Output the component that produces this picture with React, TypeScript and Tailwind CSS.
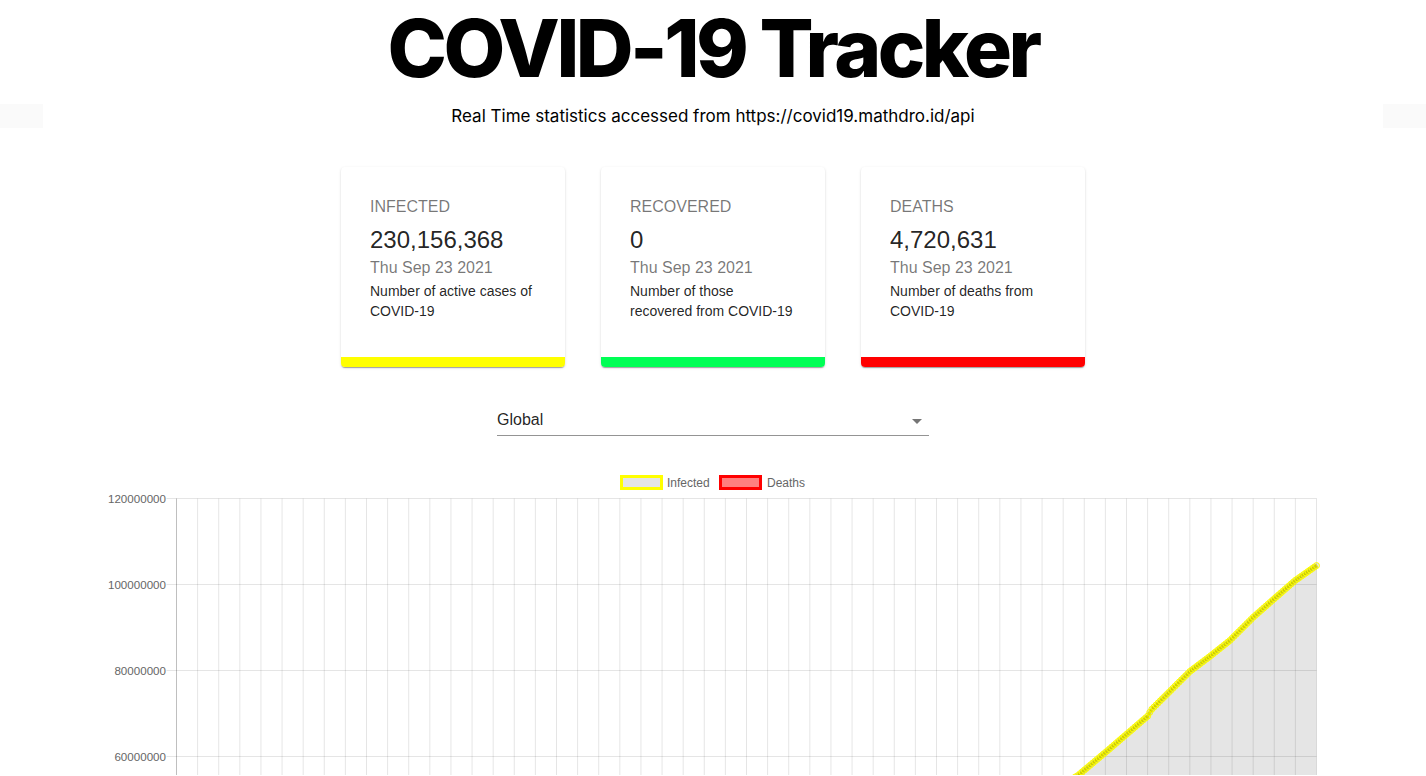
import React from "react";

const cards = [
  { label: "INFECTED", value: "230,156,368", text: "Number of active cases of COVID-19", bar: "bg-[#ffff00]" },
  { label: "RECOVERED", value: "0", text: "Number of those recovered from COVID-19", bar: "bg-[#00ff55]" },
  { label: "DEATHS", value: "4,720,631", text: "Number of deaths from COVID-19", bar: "bg-[#ff0000]" },
];

// chart geometry, in page pixels
const LEFT = 176.5;
const RIGHT = 1316.5;
const TOP = 499.5;
const ROW = 86;
const BASE = TOP + ROW * 6;
const COLS = 54;
const N = 541;
const VIEW_BOTTOM = 776;

// infected totals (millions) against x position, read off the reference
const knots: [number, number][] = [
  [176.5, 0], [300, 0.4], [400, 1.6], [500, 5], [600, 11], [700, 18], [800, 26],
  [900, 35], [1000, 45], [1078, 55.6], [1106.7, 61.2], [1147.7, 69.4], [1151, 70.8],
  [1190, 79.8], [1210, 83.3], [1230, 87], [1253.3, 92.4], [1273.3, 96.5], [1295, 100.9], [1316.5, 104.4],
];

const interp = (x: number) => {
  for (let i = 1; i < knots.length; i++) {
    const [x1, v1] = knots[i];
    const [x0, v0] = knots[i - 1];
    if (x <= x1) return v0 + ((x - x0) / (x1 - x0)) * (v1 - v0);
  }
  return knots[knots.length - 1][1];
};

const toY = (v: number) => BASE - v * (ROW / 20);

const xs = Array.from({ length: N }, (_, i) => LEFT + (i * (RIGHT - LEFT)) / (N - 1));
const infected = xs.map((x) => [x, toY(interp(x))] as const);

const linePath = (pts: readonly (readonly [number, number])[]) =>
  pts.map(([x, y], i) => `${i ? "L" : "M"}${x.toFixed(1)} ${y.toFixed(1)}`).join(" ");
const areaPath = (pts: readonly (readonly [number, number])[]) =>
  `${linePath(pts)} L${RIGHT} ${BASE} L${LEFT} ${BASE} Z`;

// only the rows that fall inside the window
const yLabels = ["120000000", "100000000", "80000000", "60000000"];

function Chart() {
  return (
    <svg
      width={1426}
      height={VIEW_BOTTOM - 465}
      viewBox={`0 465 1426 ${VIEW_BOTTOM - 465}`}
      className="block"
      style={{ fontFamily: "'Liberation Sans', Arial, sans-serif" }}
    >
      {/* legend */}
      <rect x={621.5} y={477.5} width={40} height={12} fill="rgba(0,0,0,0.1)" stroke="#ffff00" strokeWidth={3} />
      <text x={667} y={487.5} fontSize={12} fill="#666">Infected</text>
      <rect x={720.5} y={477.5} width={40} height={12} fill="rgba(255,0,0,0.5)" stroke="#ff0000" strokeWidth={3} />
      <text x={767} y={487.5} fontSize={12} fill="#666">Deaths</text>

      {/* grid */}
      {Array.from({ length: COLS + 1 }, (_, i) => {
        const x = LEFT + (i * (RIGHT - LEFT)) / COLS;
        return (
          <line key={"v" + i} x1={x} x2={x} y1={TOP} y2={BASE + 10} stroke={i === 0 ? "rgba(0,0,0,0.25)" : "rgba(0,0,0,0.1)"} strokeWidth={1} />
        );
      })}
      {yLabels.map((l, i) => {
        const y = TOP + i * ROW;
        return (
          <g key={l}>
            <line x1={LEFT - 10} x2={RIGHT} y1={y} y2={y} stroke="rgba(0,0,0,0.1)" strokeWidth={1} />
            <text x={166} y={y + 4} fontSize={11.6} fill="#666" textAnchor="end">{l}</text>
          </g>
        );
      })}

      {/* infected */}
      <path d={areaPath(infected)} fill="rgba(0,0,0,0.1)" />
      <path d={linePath(infected)} fill="none" stroke="#ffff00" strokeWidth={3} />
      {infected
        .filter(([, y]) => y < VIEW_BOTTOM + 4)
        .map(([x, y], i) => (
          <circle key={"i" + i} cx={x} cy={y} r={3} fill="rgba(0,0,0,0.1)" stroke="#ffff00" strokeWidth={1} />
        ))}
    </svg>
  );
}

export default function App() {
  return (
    <div className="h-[776px] overflow-hidden bg-white font-['Liberation_Sans',Arial,sans-serif] text-[rgba(0,0,0,0.87)]">
      <h1 className="pt-[8px] text-center font-['Inter',sans-serif] text-[80px] font-extrabold leading-none tracking-[-3.5px] text-black">
        COVID-19 Tracker
      </h1>

      <div className="mt-[16px] flex h-[24px] items-center justify-between">
        <div className="h-[24px] w-[43px] bg-[#fafafa]" />
        <p className="font-['Inter',sans-serif] text-[17px] leading-[24px] text-black">
          Real Time statistics accessed from https://covid19.mathdro.id/api
        </p>
        <div className="h-[24px] w-[43px] bg-[#fafafa]" />
      </div>

      <div className="mt-[39px] flex justify-center gap-[36px]">
        {cards.map((c) => (
          <div
            key={c.label}
            className="flex h-[200px] w-[224px] flex-col overflow-hidden rounded-[4px] bg-white shadow-[0px_2px_1px_-1px_rgba(0,0,0,0.2),0px_1px_1px_0px_rgba(0,0,0,0.14),0px_1px_3px_0px_rgba(0,0,0,0.12)]"
          >
            <div className="flex-1 pl-[29px] pr-[27px] pt-[28px]">
              <div className="text-[16px] leading-[24px] text-[rgba(0,0,0,0.54)]">{c.label}</div>
              <div className="mt-[5px] text-[24px] leading-[32px]">{c.value}</div>
              <div className="text-[16px] leading-[24px] text-[rgba(0,0,0,0.54)]">Thu Sep 23 2021</div>
              <div className="mt-px text-[14px] leading-[20px]">{c.text}</div>
            </div>
            <div className={`h-[10px] ${c.bar}`} />
          </div>
        ))}
      </div>

      <div className="mx-auto mt-[37px] w-[432px]">
        <div className="relative flex h-[32px] items-center border-b border-[rgba(0,0,0,0.42)]">
          <span className="pb-px text-[16px] leading-[19px]">Global</span>
          <svg className="absolute right-0 top-[5px] h-[24px] w-[24px]" viewBox="0 0 24 24">
            <path d="M7 10l5 5 5-5z" fill="rgba(0,0,0,0.54)" />
          </svg>
        </div>
      </div>

      <div className="mt-[28px]">
        <Chart />
      </div>
    </div>
  );
}
